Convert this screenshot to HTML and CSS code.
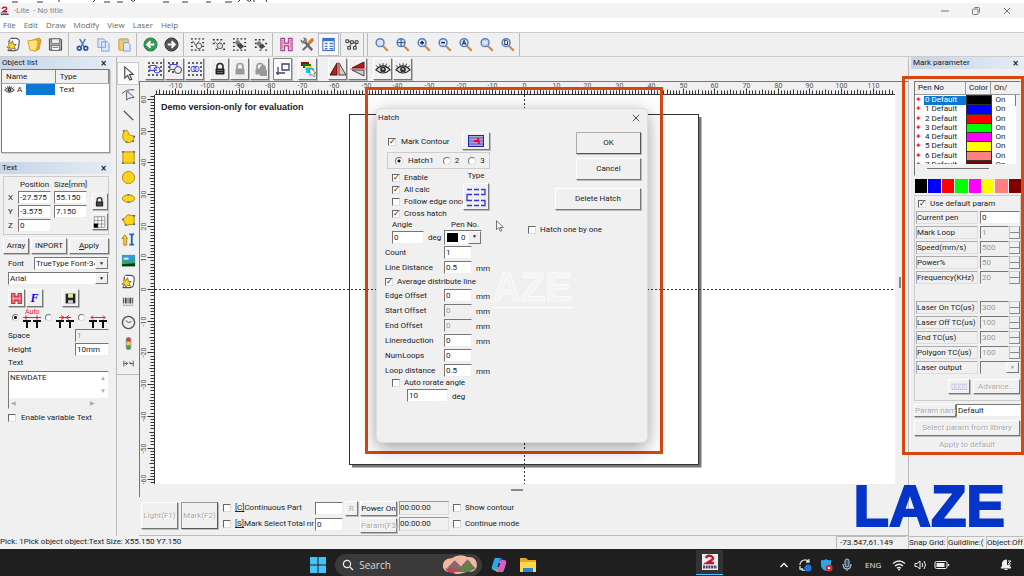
FILE: index.html
```html
<!DOCTYPE html>
<html lang="en">
<head>
<meta charset="utf-8">
<title>Lite - No title</title>
<link rel="stylesheet" href="styles.css">
</head>
<body>
<svg class="defs" aria-hidden="true">
  <symbol id="lens" viewBox="0 0 16 16"><path d="M9 9l5 5" stroke="#c8924a" stroke-width="2.4" stroke-linecap="round"/><circle cx="6.5" cy="6" r="4.2" fill="#d9e6f7" stroke="#5a7fc4" stroke-width="1.6"/></symbol>
  <symbol id="dots" viewBox="0 0 16 16"><path d="M1 2h2M5 2h2M9 2h2M13 2h2M1 14h2M5 14h2M9 14h2M13 14h2M1 6h2M13 6h2M1 10h2M13 10h2" fill="none" stroke="#333" stroke-width="1.500"/></symbol>
  <symbol id="lock" viewBox="0 0 16 16"><path d="M5 8V5.500a3 3 0 0 1 6 0V8" fill="none" stroke="currentColor" stroke-width="1.600"/><rect x="3.500" y="7.500" width="9" height="6" rx="1" fill="currentColor"/><path d="M5 9.500h6M5 11.500h6" stroke="#999" stroke-width=".6"/></symbol>
  <symbol id="eye" viewBox="0 0 18 14"><path d="M1 8q8-9 16 0q-8 7-16 0z" fill="#ddd" stroke="#222" stroke-width="1.300"/><circle cx="9" cy="7.500" r="3.200" fill="#333"/><circle cx="9" cy="7" r="1" fill="#ddd"/><path d="M3 5L1.500 3M6 3.500L5 1M9 3V.5M12 3.500l1-2.500M15 5l1.500-2" stroke="#222"/></symbol>
  <symbol id="arrow" viewBox="0 0 12 16"><path d="M2 1v12l3-3 2 5 2-1-2-4h4z" fill="#fff" stroke="#444" stroke-width="1"/></symbol>
  <symbol id="note" viewBox="0 0 16 16"><path d="M5 1.500h6q4 1 3 5l-1 6q-1 2-4 2H3q-1 0-1-1" fill="#fff" stroke="#555" stroke-width="1.200"/><path d="M5 1.500q-2 1-1 3M3 14q-1-1 1-3" fill="none" stroke="#555"/><path d="M3 4l2 3 2-3 1 4 3 0-2 2 1 3-3-1-2 2-1-3-3 0 2-2z" fill="#ffd51c" stroke="#655" stroke-width=".8"/></symbol>
</svg>

<svg class="sliver" aria-hidden="true"><path d="M12 2h6M37 2h6M58 1h2M95 0l-2 2M104 2h6M117 2h6M131 0q3 3 4 0M163 2h6M182 2h6M206 2h5M225 2h7M240 0l-2 2M247 0q3 3 4 0M254 0v2M266 0l1 2" stroke="#333" fill="none"/></svg>

<header class="titlebar">
  <svg class="i10" viewBox="0 0 14 14"><rect width="14" height="14" fill="#eee"/><path d="M3 4q1-3 5-2q3 2-1 4L4 8h6" fill="none" stroke="#c01830" stroke-width="2"/><path d="M1 11.500h11" stroke="#446" stroke-width="2"/></svg>
  <span class="apptitle">-Lite&nbsp; - No title</span>
  <div class="winbtns">
    <button aria-label="Minimize"><svg viewBox="0 0 10 10"><path d="M1 5h8" stroke="#777"/></svg></button>
    <button aria-label="Restore"><svg viewBox="0 0 10 10"><rect x="1.500" y="3" width="5.500" height="5.500" rx="1" fill="none" stroke="#777"/><path d="M3.500 1.500h4q1 0 1 1v4" fill="none" stroke="#777"/></svg></button>
    <button aria-label="Close"><svg viewBox="0 0 10 10"><path d="M2 2l6 6M8 2L2 8" stroke="#777"/></svg></button>
  </div>
</header>

<nav class="menubar">
  <button>File</button><button>Edit</button><button>Draw</button><button>Modify</button><button>View</button><button>Laser</button><button>Help</button>
</nav>

<div class="toolbar" role="toolbar" aria-label="Standard">
  <div class="tgroup">
    <button aria-label="New"><svg viewBox="0 0 16 16"><use href="#note"/></svg></button>
    <button aria-label="Open"><svg viewBox="0 0 16 16"><path d="M4 4l9-3 2 2-2 10-5 2z" fill="#f0a818" stroke="#a70" stroke-width=".6"/><path d="M1 4l8-1 3 1-2 11-7-1z" fill="#ffe07a" stroke="#c80" stroke-width=".7"/></svg></button>
    <button aria-label="Save"><svg viewBox="0 0 16 16"><path d="M1.500 2h12l1 1v11h-13z" fill="#aaa" stroke="#444"/><rect x="4" y="2" width="8" height="5" fill="#eee" stroke="#555" stroke-width=".7"/><rect x="4" y="9" width="8" height="5" fill="#fff" stroke="#555" stroke-width=".7"/><path d="M5 11h6" stroke="#666"/></svg></button>
  </div>
  <div class="tgroup">
    <button aria-label="Cut"><svg viewBox="0 0 16 16"><path d="M5 2l5 9M11 2l-5 9" stroke="#47a" stroke-width="1.400"/><circle cx="4.500" cy="12" r="2" fill="none" stroke="#25a" stroke-width="1.800"/><circle cx="11.500" cy="12" r="2" fill="none" stroke="#25a" stroke-width="1.800"/></svg></button>
    <button aria-label="Copy"><svg viewBox="0 0 16 16"><path d="M2 2h6l2 2v7H2zM6 5h6l2 2v8H6z" fill="#dce9fb" stroke="#7d9cdc"/></svg></button>
    <button aria-label="Paste"><svg viewBox="0 0 16 16"><rect x="2" y="2" width="10" height="12" rx="1" fill="#f3cf5c" stroke="#b9994a"/><rect x="5" y="1" width="4" height="3" fill="#bbb"/><path d="M7 6h5l2 2v7H7z" fill="#dce9fb" stroke="#7d9cdc"/></svg></button>
  </div>
  <div class="tgroup">
    <button aria-label="Undo"><svg viewBox="0 0 16 16"><circle cx="8" cy="8" r="7" fill="#3a9a4c" stroke="#276"/><path d="M12 8H5M8 4.500L4.500 8 8 11.500" fill="none" stroke="#fff" stroke-width="2"/></svg></button>
    <button aria-label="Redo"><svg viewBox="0 0 16 16"><circle cx="8" cy="8" r="7" fill="#555" stroke="#333"/><path d="M4 8h7M8 4.500L11.500 8 8 11.500" fill="none" stroke="#fff" stroke-width="2"/></svg></button>
  </div>
  <div class="tgroup">
    <button aria-label="Combine"><svg viewBox="0 0 16 16"><use href="#dots"/><path d="M3 4l3 5 4-5" fill="none" stroke="#555"/><circle cx="9.500" cy="9.500" r="3" fill="#eee" stroke="#555"/></svg></button>
    <button aria-label="Uncombine"><svg viewBox="0 0 16 16"><path d="M2 3h2M6 3h2M10 3h2M2 7h2M13 7h2M5 13h2M13 13h2" stroke="#333" stroke-width="1.500"/><path d="M4 5l3 3 3-3" fill="none" stroke="#555"/><circle cx="9.500" cy="9.500" r="3" fill="#ddd" stroke="#555"/></svg></button>
    <button aria-label="Group"><svg viewBox="0 0 16 16"><use href="#dots"/><circle cx="6" cy="6" r="2.500" fill="#777"/><path d="M5 9l4-3 4 4-4 3z" fill="#444"/></svg></button>
    <button aria-label="Ungroup"><svg viewBox="0 0 16 16"><path d="M2 3h2M6 3h2M10 3h2M2 7h2M2 11h2M13 7h2M7 14h2M13 14h2" stroke="#333" stroke-width="1.500"/><circle cx="6.500" cy="7" r="2.500" fill="#777"/><path d="M6 10l4-3 3 3-4 3z" fill="#444"/></svg></button>
  </div>
  <div class="tgroup">
    <button aria-label="Hatch"><svg viewBox="0 0 16 16"><path d="M2 1.500h4v5h4v-5h4v13h-4v-5H6v5H2z" fill="#f4b8cf" stroke="#a0499b" stroke-width="1.200"/><path d="M4 3v10M12 3v10" stroke="#d36" stroke-dasharray="1 1"/></svg></button>
    <button aria-label="Tools"><svg viewBox="0 0 16 16"><path d="M4 4l9 10" stroke="#666" stroke-width="2.600"/><path d="M13 4L3 14" stroke="#666" stroke-width="2.200"/><path d="M9 7l5-5" stroke="#e87820" stroke-width="3.500"/><path d="M1 3l2 2 2-2-1-2q3 0 3 3q-1 3-4 2.500Q1 6 1 3z" fill="#999" stroke="#555" stroke-width=".8"/></svg></button>
    <button class="pressed" aria-label="Properties"><svg viewBox="0 0 16 16"><rect x="2" y="1.500" width="12" height="13" fill="#fff" stroke="#2859b8"/><path d="M2 3h12" stroke="#3a73d8" stroke-width="3"/><path d="M4 7h3M9 7h4M4 10h3M9 10h4M4 12.500h3M9 12.500h4" stroke="#4a78c8" stroke-width="1.500"/></svg></button>
  </div>
  <div class="tgroup last">
    <button aria-label="Nodes"><svg viewBox="0 0 16 16"><path d="M2 3h3v3H2zM7 4h3v3H7zM12 4h3v3h-3zM4 10h3v3H4zM10 10h3v3h-3z" fill="#ddd" stroke="#333"/><path d="M5 5h2M10 6h2M6 10l2-3M12 10l1-3" stroke="#333"/></svg></button>
  </div>
  <div class="tgroup zooms">
    <button aria-label="Zoom"><svg viewBox="0 0 16 16"><use href="#lens"/></svg></button>
    <button aria-label="Pan"><svg viewBox="0 0 16 16"><use href="#lens"/><path d="M6.500 2v8M2.500 6h8" stroke="#346" stroke-width="1"/></svg></button>
    <button aria-label="Zoom in"><svg viewBox="0 0 16 16"><use href="#lens"/><path d="M6.500 4v4M4.500 6h4" stroke="#124" stroke-width="1.600"/></svg></button>
    <button aria-label="Zoom out"><svg viewBox="0 0 16 16"><use href="#lens"/><path d="M4.500 6h4" stroke="#124" stroke-width="1.600"/></svg></button>
    <button aria-label="Zoom all"><svg viewBox="0 0 16 16"><use href="#lens"/><path d="M4.500 8.500l2-5 2 5M5 7h3" fill="none" stroke="#124"/></svg></button>
    <button aria-label="Zoom selected"><svg viewBox="0 0 16 16"><use href="#lens"/><rect x="4.500" y="4" width="4" height="4" fill="#eef" stroke="#bcd"/></svg></button>
    <button aria-label="Zoom page"><svg viewBox="0 0 16 16"><use href="#lens"/><path d="M5 3.500h2l1 1V8H5z" fill="#fff" stroke="#124"/></svg></button>
  </div>
</div>

<main class="main">
  <aside class="dock left">
    <h2 class="panelhead">Object list<button aria-label="Close object list">×</button></h2>
    <div class="objlist">
      <table>
        <thead><tr><th>Name</th><th>Type</th></tr></thead>
        <tbody><tr><td><div class="objname"><svg viewBox="0 0 18 14"><use href="#eye"/></svg>A<span class="picked"></span></div></td><td>Text</td></tr></tbody>
      </table>
    </div>
    <h2 class="panelhead second">Text<button aria-label="Close text">×</button></h2>
    <div class="textpanel">
      <div class="posbox">
        <div class="posgrid">
          <span></span><span class="poshead">Position</span><span class="poshead">Size[mm]</span>
          <label for="px">X</label><input id="px" value="-27.575"><input aria-label="Width" value="55.150">
          <label for="py">Y</label><input id="py" value="-3.575"><input aria-label="Height" value="7.150">
          <label for="pz">Z</label><input id="pz" value="0">
        </div>
        <div class="poslocks">
          <button class="raised" aria-label="Lock ratio"><svg viewBox="0 0 16 16"><use href="#lock"/></svg></button>
          <button class="raised" aria-label="Anchor"><svg viewBox="0 0 16 16"><path d="M1.500 1.500h13v13h-13zM6 1.500v13M10.500 1.500v13M1.500 6h13M1.500 10.500h13" fill="#fff" stroke="#888"/><path d="M1 10h5v5H1z"/></svg></button>
        </div>
      </div>
      <div class="actions"><button class="raised">Array</button><button class="raised">INPORT</button><button class="raised"><u>A</u>pply</button></div>
      <div class="fontrow"><label for="ft">Font</label><span class="pick"><select id="ft"><option>TrueType Font-345</option></select></span></div>
      <span class="pick face"><select aria-label="Typeface"><option>Arial</option></select></span>
      <div class="fonticons">
        <button class="raised" aria-label="Hatch text"><svg viewBox="0 0 16 16"><path d="M2 2h4v4h4V2h4v12h-4v-4H6v4H2z" fill="#f9a" stroke="#c33" stroke-width="1.400"/><path d="M1 5h14M1 11h14" stroke="#c33"/></svg></button>
        <button class="raised fbtn" aria-label="Font settings">F</button>
        <button class="raised saver" aria-label="Save text"><svg viewBox="0 0 16 16"><path d="M2 2h12v12H2z" fill="#222"/><path d="M5 2h6v5H5z" fill="#dfe8a0"/><path d="M5 10h6v4H5z" fill="#ccc"/></svg></button>
      </div>
      <div class="spacing">
        <input type="radio" name="sp" checked aria-label="Auto spacing"><svg viewBox="0 0 20 20"><path d="M1 9.500h18M4 7.500v4M15 7.500v4" stroke="#e22" stroke-width="1.200"/><path d="M1 13h8M5 13v7M11 13h8M15 13v7" stroke="#111" stroke-width="2"/><text x="3" y="6" class="auto">Auto</text></svg>
        <input type="radio" name="sp" aria-label="Edge spacing"><svg viewBox="0 0 20 20"><path d="M4 9.500h12M6 7.500l3 2-3 2M14 7.500l-3 2 3 2" fill="none" stroke="#e22"/><path d="M1 13h8M5 13v7M11 13h8M15 13v7" stroke="#111" stroke-width="2"/></svg>
        <input type="radio" name="sp" aria-label="Centre spacing"><svg viewBox="0 0 20 20"><path d="M3 9.500h14M5 7.500l-2 2 2 2M15 7.500l2 2-2 2" fill="none" stroke="#e22"/><path d="M1 13h8M5 13v7M11 13h8M15 13v7" stroke="#111" stroke-width="2"/></svg>
      </div>
      <div class="field"><label for="spc">Space</label><input id="spc" value="1" disabled></div>
      <div class="field"><label for="hgt">Height</label><input id="hgt" value="10mm"></div>
      <label class="textlabel" for="txt">Text</label>
      <div class="areawrap"><textarea id="txt">NEWDATE</textarea><span class="up">▲</span><span class="down">▼</span><span class="lt">◀</span><span class="rt">▶</span></div>
      <label class="check vartext"><input type="checkbox">Enable variable Text</label>
    </div>
  </aside>

  <div class="palette" role="toolbar" aria-label="Draw">
    <button aria-label="Pick" class="pressed"><svg viewBox="0 0 16 16"><path d="M4 1v12l3-3 2.500 5 2-1-2.500-5h4z" fill="#fff" stroke="#444" stroke-width="1.200"/></svg></button>
    <button aria-label="Node"><svg viewBox="0 0 16 16"><path d="M1 6q5-5 13-4M6 3v10l2-2 6-1z" fill="#eee" stroke="#456"/><path d="M5 2h3v3H5z" fill="#89b"/></svg></button>
    <button aria-label="Line"><svg viewBox="0 0 16 16"><path d="M3 3l10 10" stroke="#345" stroke-width="1.300"/></svg></button>
    <button aria-label="Curve"><svg viewBox="0 0 16 16"><path d="M3 2q4-2 5 2q0 3 3 3q4 0 3 3q-2 5-7 4.500Q1 13 2 6z" fill="#ffd21c" stroke="#a80"/><path d="M2 2h2M13 8h2M5 14h2M12 13h2" stroke="#26b" stroke-width="1.500"/></svg></button>
    <button aria-label="Rectangle"><svg viewBox="0 0 16 16"><path d="M2 2h12v12H2z" fill="#ffd21c" stroke="#a80"/><path d="M1 2h2M13 2h2M1 14h2M13 14h2" stroke="#47a" stroke-width="2"/></svg></button>
    <button aria-label="Circle"><svg viewBox="0 0 16 16"><circle cx="8" cy="8" r="6.500" fill="#ffd21c" stroke="#a80"/></svg></button>
    <button aria-label="Ellipse"><svg viewBox="0 0 16 16"><ellipse cx="8" cy="8" rx="6.500" ry="4" fill="#ffd21c" stroke="#a80"/><path d="M7 4h2M7 12h2" stroke="#47a" stroke-width="1.500"/></svg></button>
    <button aria-label="Polygon"><svg viewBox="0 0 16 16"><path d="M2 8l5-5 7 1v9l-9 1z" fill="#ffd21c" stroke="#a80"/><path d="M1 8h2M13 4h2M13 13h2M4 14h2" stroke="#26b" stroke-width="1.500"/></svg></button>
    <button aria-label="Text"><svg viewBox="0 0 16 16"><path d="M1 7l3-4 3 4H6v7H3V7z" fill="#ffd21c" stroke="#863" stroke-width=".8"/><path d="M9 2.500h5M9 13.500h5M11.500 2v12" stroke="#26a" stroke-width="2"/></svg></button>
    <button aria-label="Bitmap"><svg viewBox="0 0 16 16"><path d="M1 2h14v12H1z" fill="#39d"/><path d="M1 9q5-3 7 0t7-4v9H1z" fill="#3a5"/><path d="M3 5h5v2H3z" fill="#dff"/><path d="M1 12l14-1v3H1z" fill="#132"/></svg></button>
    <button aria-label="Vector file"><svg viewBox="0 0 16 16"><use href="#note"/></svg></button>
    <button aria-label="Barcode"><svg viewBox="0 0 16 16"><path d="M2 7h12" stroke="#444" stroke-width="6" stroke-dasharray="1 1 2 1"/><path d="M2 12h12" stroke="#777" stroke-dasharray="2 1"/></svg></button>
    <button aria-label="Timer"><svg viewBox="0 0 16 16"><circle cx="8" cy="8" r="6.500" fill="#eee" stroke="#555" stroke-width="1.500"/><path d="M5 6l3 2 3-1" fill="none" stroke="#444"/></svg></button>
    <button aria-label="Input output"><svg viewBox="0 0 16 16"><rect x="5" y="1" width="6" height="14" rx="3" fill="#999"/><circle cx="8" cy="4" r="2.200" fill="#e33"/><circle cx="8" cy="8" r="2.200" fill="#fc3"/><circle cx="8" cy="12" r="2.200" fill="#3a4"/></svg></button>
    <button aria-label="Encoder"><svg viewBox="0 0 16 16"><path d="M3 5v6M13 5v6M3 8h4M9 8h4M5 6l2 2-2 2M9 6l2 3" fill="none" stroke="#555"/></svg></button>
  </div>

  <section class="center">
    <div class="toolbar2" role="toolbar" aria-label="Arrange">
      <button class="raised" aria-label="Select all"><svg viewBox="0 0 16 16"><use href="#dots"/><rect x="3" y="4.500" width="6" height="5" fill="none" stroke="#44e"/><circle cx="10" cy="9" r="3" fill="none" stroke="#44e"/></svg></button>
      <button class="raised" aria-label="Invert selection"><svg viewBox="0 0 16 16"><path d="M1 2h2M5 2h2M9 2h2M1 6h2M1 10h2M5 11h2" stroke="#222" stroke-width="1.500"/><rect x="3" y="3.500" width="7" height="5" fill="none" stroke="#44e"/><circle cx="11" cy="9" r="3.500" fill="#eee" stroke="#445"/></svg></button>
      <button class="raised" aria-label="Selection"><svg viewBox="0 0 16 16"><use href="#dots"/><rect x="4" y="5.500" width="5" height="5" rx="2" fill="none" stroke="#44e"/><rect x="7" y="5.500" width="5" height="5" rx="2" fill="none" stroke="#44e"/></svg></button>
      <button class="raised gap" aria-label="Lock"><svg viewBox="0 0 16 16"><use href="#lock"/></svg></button>
      <button class="raised dim" aria-label="Unlock"><svg viewBox="0 0 16 16"><use href="#lock"/></svg></button>
      <button class="raised dim" aria-label="Unlock all"><svg viewBox="0 0 16 16"><use href="#lock"/><path d="M8 9V7a3 3 0 0 1 6 0v2h1v6H8z" fill="currentColor"/></svg></button>
      <button class="raised sunk" aria-label="Put to origin"><svg viewBox="0 0 16 16"><path d="M7 3h7v6H7zM3 6v8M1 12h9" fill="none" stroke="#446" stroke-width="1.300"/></svg></button>
      <button class="raised gap" aria-label="Layers"><svg viewBox="0 0 16 16"><path d="M1 1h8v4H1z" fill="#811"/><path d="M3 3h8v4H3z" fill="#171"/><path d="M5 5h7v4H5z" fill="#fc2"/><path d="M6 7h8v5H6z" fill="#1cd"/><path d="M10 7v8l2-2 2 3 1-1-1-3h2z" fill="#fff" stroke="#666" stroke-width=".7"/></svg></button>
      <button class="raised wide" aria-label="Mirror horizontal"><svg viewBox="0 0 16 16"><path d="M7 2v12H0z" fill="#a22" stroke="#511"/><path d="M9 2v12h7z" fill="#ccc" stroke="#444"/><path d="M8 1v14" stroke="#f55"/></svg></button>
      <button class="raised" aria-label="Mirror vertical"><svg viewBox="0 0 16 16"><path d="M2 7h12V1z" fill="#a22" stroke="#511"/><path d="M2 9h12v6z" fill="#ccc" stroke="#444"/><path d="M0 8h16" stroke="#f55"/></svg></button>
      <button class="raised gap" aria-label="Show"><svg viewBox="0 0 18 14"><use href="#eye"/></svg></button>
      <button class="raised" aria-label="Preview"><svg viewBox="0 0 18 14"><use href="#eye"/></svg></button>
    </div>
    <div class="stage">
      <svg class="rulertop" id="rulertop" aria-hidden="true"></svg>
      <svg class="rulerleft" id="rulerleft" aria-hidden="true"></svg>
      <div class="canvas">
        <svg class="sheet" aria-hidden="true">
          <path d="M197 371h348V22" fill="none" stroke="#777" stroke-width="3"/>
          <rect x="194.500" y="19.500" width="349" height="350" fill="#fff" stroke="#333"/>
          <path d="M0 194.500h740M369.500 0v389" stroke="#333" stroke-dasharray="2 2"/>
        </svg>
        <strong class="demo">Demo version-only for evaluation</strong>
        <div class="mark-frame"></div>

        <div class="dialog" role="dialog" aria-label="Hatch">
          <span class="ghost" aria-hidden="true">AZE</span>
          <div class="dialoghead"><span>Hatch</span><button aria-label="Close"><svg viewBox="0 0 10 10"><path d="M1 1l8 8M9 1l-8 8" stroke="#222"/></svg></button></div>
          <div class="dialogbody">
            <div class="settings">
              <div class="contour"><label class="check"><input type="checkbox" checked>Mark Contour</label>
                <button class="raised" aria-label="Contour order"><svg viewBox="0 0 16 12"><rect x=".5" y=".5" width="15" height="11" fill="#aac" stroke="#22a"/><path d="M1 3h14M1 6h14M1 9h14" stroke="#55c"/><path d="M6 6h4M10 3l1 6" stroke="#e04" stroke-width="2"/></svg></button></div>
              <div class="passes"><label class="check"><input type="radio" name="h" checked>Hatch1</label><label class="check"><input type="radio" name="h">2</label><label class="check"><input type="radio" name="h">3</label></div>
              <div class="modes">
                <div class="modelist">
                  <label class="check"><input type="checkbox" checked>Enable</label>
                  <label class="check"><input type="checkbox" checked>All calc</label>
                  <label class="check"><input type="checkbox">Follow edge once</label>
                  <label class="check"><input type="checkbox" checked>Cross hatch</label>
                </div>
                <div class="type"><span>Type</span><button class="raised" aria-label="Hatch type"><svg viewBox="0 0 22 20"><path d="M2 2.500h5M9 2.500h5M16 2.500h4v5h-4M9 7.500h5M7 7.500H2v6h5M9 13.500h5M16 13.500h4v5h-4M9 18.500h5M2 18.500h5" fill="none" stroke="#33d" stroke-width="1.300"/></svg></button></div>
              </div>
              <div class="anglerow">
                <div class="angle"><label for="ang">Angle</label><div class="pair"><input id="ang" value="0"><span>deg</span></div></div>
                <div class="pen"><label for="pen">Pen No.</label><span class="pick penpick"><i></i><select id="pen"><option>0</option></select></span></div>
              </div>
              <div class="rows">
                <div class="row"><label for="r1">Count</label><input id="r1" value="1"></div>
                <div class="row"><label for="r2">Line Distance</label><input id="r2" value="0.5"><span>mm</span></div>
                <label class="check avg"><input type="checkbox" checked>Average distribute line</label>
                <div class="row"><label for="r3">Edge Offset</label><input id="r3" value="0"><span>mm</span></div>
                <div class="row"><label for="r4">Start Offset</label><input id="r4" value="0" disabled><span>mm</span></div>
                <div class="row"><label for="r5">End Offset</label><input id="r5" value="0" disabled><span>mm</span></div>
                <div class="row"><label for="r6">Linereduction</label><input id="r6" value="0"><span>mm</span></div>
                <div class="row"><label for="r7">NumLoops</label><input id="r7" value="0"></div>
                <div class="row"><label for="r8">Loop distance</label><input id="r8" value="0.5"><span>mm</span></div>
                <label class="check rot"><input type="checkbox">Auto rorate angle</label>
                <div class="rotrow"><input aria-label="Rotate angle" value="10"><span>deg</span></div>
              </div>
            </div>
            <div class="commands">
              <button class="raised ok">OK</button>
              <button class="raised">Cancel</button>
              <button class="raised del">Delete Hatch</button>
              <label class="check one"><input type="checkbox">Hatch one by one</label>
            </div>
          </div>
        </div>
        <svg class="pointer" viewBox="0 0 12 16" aria-hidden="true"><use href="#arrow"/></svg>
      </div>
      <div class="vscroll"><i></i></div>
      <div class="hscroll"><i></i></div>
    </div>
    <div class="marking">
      <button class="raised big" disabled>Light(F1)</button>
      <button class="raised big strong" disabled>Mark(F2)</button>
      <div class="two chk"><label class="check"><input type="checkbox"><span><u>[C]</u>Continuous</span></label><label class="check"><input type="checkbox"><span><u>[S]</u>Mark Select</span></label></div>
      <div class="two parts"><div><label for="part">Part</label><input id="part" value=""></div><div><label for="tot">Total nr</label><input id="tot" value="0"></div></div>
      <button class="raised reset" disabled>R</button>
      <div class="two power"><button class="raised">Power On</button><button class="raised" disabled>Param(F3)</button></div>
      <div class="two times"><output>00:00:00</output><output>00:00:00</output></div>
      <div class="two chk2"><label class="check"><input type="checkbox">Show contour</label><label class="check"><input type="checkbox">Continue mode</label></div>
    </div>
  </section>

  <aside class="dock right">
    <h2 class="panelhead">Mark parameter<button aria-label="Close mark parameter">×</button></h2>
    <div class="pens">
      <div class="penhead"><span>Pen No</span><span>Color</span><span>On/</span></div>
      <div class="penclip">
        <table>
          <tr class="sel"><td>✦</td><td>0 Default</td><td class="c0"></td><td>On</td></tr>
          <tr><td>✦</td><td>1 Default</td><td class="c1"></td><td>On</td></tr>
          <tr><td>✦</td><td>2 Default</td><td class="c2"></td><td>On</td></tr>
          <tr><td>✦</td><td>3 Default</td><td class="c3"></td><td>On</td></tr>
          <tr><td>✦</td><td>4 Default</td><td class="c4"></td><td>On</td></tr>
          <tr><td>✦</td><td>5 Default</td><td class="c5"></td><td>On</td></tr>
          <tr><td>✦</td><td>6 Default</td><td class="c6"></td><td>On</td></tr>
          <tr><td>✦</td><td>7 Default</td><td class="c7"></td><td>On</td></tr>
        </table>
        <i class="thumb"></i>
      </div>
      <i class="hthumb"></i>
    </div>
    <div class="swatches"><button class="c0" aria-label="Pen 0"></button><button class="c1" aria-label="Pen 1"></button><button class="c2" aria-label="Pen 2"></button><button class="c3" aria-label="Pen 3"></button><button class="c4" aria-label="Pen 4"></button><button class="c5" aria-label="Pen 5"></button><button class="c6" aria-label="Pen 6"></button><button class="c7" aria-label="Pen 7"></button></div>
    <div class="params">
      <label class="check"><input type="checkbox" checked>Use default param</label>
      <div class="prow"><label for="p0">Current pen</label><input id="p0" value="0"></div>
      <div class="prow spin"><label for="p1">Mark Loop</label><input id="p1" value="1" disabled><i></i></div>
      <div class="prow spin"><label for="p2">Speed(mm/s)</label><input id="p2" value="500" disabled><i></i></div>
      <div class="prow spin"><label for="p3">Power%</label><input id="p3" value="50" disabled><i></i></div>
      <div class="prow spin"><label for="p4">Frequency(KHz)</label><input id="p4" value="20" disabled><i></i></div>
      <div class="prow spin later"><label for="p5">Laser On TC(us)</label><input id="p5" value="300" disabled><i></i></div>
      <div class="prow spin"><label for="p6">Laser Off TC(us)</label><input id="p6" value="100" disabled><i></i></div>
      <div class="prow spin"><label for="p7">End TC(us)</label><input id="p7" value="300" disabled><i></i></div>
      <div class="prow spin"><label for="p8">Polygon TC(us)</label><input id="p8" value="100" disabled><i></i></div>
      <div class="prow"><label for="p9">Laser output</label><span class="pick off"><select id="p9" disabled><option></option></select></span></div>
      <div class="advance"><button class="raised" disabled>▯▯▯▯</button><button class="raised" disabled>Advance...</button></div>
    </div>
    <div class="pname"><button class="raised" disabled>Param name</button><input aria-label="Param name" value="Default"></div>
    <button class="raised full" disabled>Select param from library</button>
    <button class="raised full last" disabled>Apply to default</button>
    <div class="mark-frame side"></div>
    <span class="brand">LAZE</span>
  </aside>
</main>

<footer class="status"><span class="msg">Pick: 1Pick object object:Text Size: X55.150 Y7.150</span><span class="cell coords">-73.547,61.149</span><span class="cell">Snap Grid:</span><span class="cell">Guildline:(</span><span class="cell">Object:Off</span></footer>

<div class="taskbar">
  <div class="launch">
    <button aria-label="Start"><svg class="i16" viewBox="0 0 16 16"><path d="M0 0h7.500v7.500H0zM8.500 0H16v7.500H8.500zM0 8.500h7.500V16H0zM8.500 8.500H16V16H8.500z" fill="#45c4f5"/></svg></button>
    <div class="search"><svg viewBox="0 0 12 12"><circle cx="5" cy="5" r="3.600" fill="none" stroke="#eee" stroke-width="1.200"/><path d="M8 8l3 3" stroke="#eee" stroke-width="1.200"/></svg><input type="search" aria-label="Search" placeholder="Search">
      <svg class="scene" viewBox="0 0 34 18"><path d="M1 12Q0 3 9 3Q17-2 24 2q9-1 9 8q0 7-10 6q-10 4-14 0Q3 17 1 12z" fill="#f0b8a0"/><path d="M5 12l7-7 6 6 6-7 8 9-8 3H9z" fill="#8a6670"/><path d="M16 13q5-5 8-4l2-4 3 8-3 3h-9z" fill="#5c8444"/><path d="M3 13q8-2 13 1l-5 3q-6 0-8-4z" fill="#b54a58"/></svg></div>
    <button aria-label="Copilot"><svg class="i16" viewBox="0 0 16 16"><path d="M4 1h5q2 0 1.500 2L8 11q-.5 2-3 2H3q-3 0-2-4L3 3q.3-1.500 1-2z" fill="#2ba7e8"/><path d="M12 15H7q-2 0-1.500-2L8 5q.5-2 3-2h2q3 0 2 4l-2 6q-.3 1.500-1 2z" fill="#d75fc4"/><path d="M2 10q1 3 3 3h1q0 2 2 2-2 0-3-1-3-1-3-4z" fill="#f7b733"/><path d="M9 1q2 0 3 2h-1q-2 0-3 2z" fill="#3459d4"/><path d="M7.500 6h1.500l-1 4H6.500z" fill="#222"/></svg></button>
    <button aria-label="Files"><svg class="i16" viewBox="0 0 16 16"><path d="M0 1h6l2 2h8v12H0z" fill="#e9a820"/><path d="M0 5h16v10H0z" fill="#ffd650"/><path d="M3 15v-4h10v4z" fill="#2a84d4"/></svg></button>
  </div>
  <button class="running" aria-label="Running app"><svg class="i16" viewBox="0 0 16 16"><rect width="16" height="16" fill="#eee"/><path d="M4 4q1-3 5-2q4 2 0 4.500L5 9h7" fill="none" stroke="#c01830" stroke-width="2.500"/><path d="M1 13h14" stroke="#446" stroke-width="3" stroke-dasharray="2 .7"/></svg></button>
  <div class="tray">
    <svg viewBox="0 0 14 14"><path d="M3.500 9L7 5.500 10.500 9" fill="none" stroke="#eee" stroke-width="1.500"/></svg>
    <svg viewBox="0 0 14 14"><path d="M2 7a5 5 0 0 1 9-3M11 1v3H8M2 8v3h3M3 11q2 2 4 1" fill="none" stroke="#ddd" stroke-width="1.300"/><circle cx="10" cy="10" r="3.500" fill="#1878e0"/></svg>
    <svg viewBox="0 0 14 14"><path d="M2 2q3 1 5-1q2 2 5 1v5q0 4-5 6Q2 11 2 7z" fill="#29a9ea"/><circle cx="10" cy="10" r="3.500" fill="#d63030"/><path d="M9 9l2 2M11 9l-2 2" stroke="#fff"/></svg>
    <svg viewBox="0 0 14 14"><rect x="5" y="1" width="4" height="8" rx="2" fill="#456" stroke="#aaccd8"/><path d="M3 6q0 5 4 5t4-5M7 11v2" fill="none" stroke="#aaccd8" stroke-width="1.200"/></svg>
    <span class="lang">ENG</span>
    <svg viewBox="0 0 14 14"><path d="M1 5.500q6-5 12 0M3 8q4-3.500 8 0M5 10.200q2-1.500 4 0" fill="none" stroke="#eee" stroke-width="1.300"/><circle cx="7" cy="11.500" r="1" fill="#eee"/></svg>
    <svg viewBox="0 0 14 14"><path d="M2 5.500h2L7 3v8L4 8.500H2zM9 5q1.500 2 0 4M11 3q3 4 0 8" fill="none" stroke="#eee"/></svg>
    <svg class="bat" viewBox="0 0 16 14"><rect x="1" y="3.500" width="12" height="7" rx="1.500" fill="none" stroke="#eee"/><rect x="2.500" y="5" width="8" height="4" fill="#eee"/><path d="M14.500 6v2" stroke="#eee" stroke-width="1.500"/></svg>
    <svg class="bell" viewBox="0 0 14 14"><path d="M2 10l1.500-2V5q.5-3 3.500-3t3.500 3v3l1.500 2zM5.500 11.500h3" fill="#eee" stroke="#eee"/><path d="M8 2h5v5H8z" fill="#1f1f1f"/><path d="M9 3h3L9 6h3" fill="none" stroke="#eee"/></svg>
  </div>
</div>
<script src="script.js"></script>
</body>
</html>
```

FILE: styles.css
```css
* { box-sizing: border-box; }
body {
  margin: 0; min-height: 100vh; display: flex; flex-direction: column;
  font-family: Roboto, "Liberation Sans", sans-serif; font-size: 8px; line-height: 10px;
  color: #222; background: #f0f0f0; overflow-x: hidden;
}
button, input, select, textarea { font: inherit; color: inherit; margin: 0; padding: 0; border: 0; border-radius: 0; background: none; outline: 0; min-width: 0; }
button { text-align: center; white-space: nowrap; }
label, span { white-space: nowrap; }
svg { display: block; flex: none; }
i { display: block; }
.defs { position: absolute; width: 0; height: 0; }
.i10 { width: 10px; height: 10px; }
.i16 { width: 16px; height: 16px; }

/* classic raised and sunken edges */
.raised { background: #f0f0f0; border: 1px solid; border-color: #fff #777 #777 #fff; box-shadow: 1px 1px 0 #bbb; }
button:disabled { color: #aaa; text-shadow: 1px 1px 0 #fff; }
input:not([type]), textarea, .pick { background: #fff; border: 1px solid; border-color: #777 #eee #eee #777; }
input:not([type]) { height: 13px; padding: 0 0 0 1px; }
input:not([type]):disabled { background: #f0f0f0; color: #999; }
.check { display: flex; align-items: center; gap: 5px; }
input[type=checkbox] { appearance: none; flex: none; width: 8px; height: 8px; background: #fff; border: 1px solid; border-color: #666 #ddd #ddd #666; position: relative; }
input[type=checkbox]:checked::before { content: "✓"; position: absolute; left: 0; top: -2px; font: bold 8px/10px "DejaVu Sans", sans-serif; color: #111; }
input[type=radio] { appearance: none; flex: none; width: 8px; height: 8px; border-radius: 50%; border: 1px solid; border-color: #777 #ddd #ddd #777; background: #fff; }
input[type=radio]:checked { background: radial-gradient(circle, #111 0 1px, #fff 2px); }
.pick { display: flex; position: relative; height: 13px; min-width: 0; }
.pick select { appearance: none; flex: 1; width: 100%; padding: 0 12px 0 1px; line-height: 10px; opacity: 1; }
.pick::after { content: "▼"; position: absolute; right: 0; top: 0; bottom: 0; width: 11px; background: #f0f0f0; border: 1px solid; border-color: #fff #777 #777 #fff; font-size: 5px; line-height: 9px; text-align: center; pointer-events: none; }
.pick.off { background: #f0f0f0; }
.pick.off::after { color: #999; }

/* top of the window */
.sliver { width: 100%; height: 3px; background: #fff; }
.titlebar { display: flex; align-items: center; height: 15px; background: #f3f3f3; color: #888; }
.apptitle { margin-left: 4px; }
.winbtns { margin-left: auto; display: flex; gap: 21px; padding-right: 12px; }
.winbtns svg { width: 10px; height: 10px; }
.menubar { display: flex; gap: 8px; height: 14px; padding-left: 3px; background: #fff; color: #666; font: 8px/14px "Open Sans", sans-serif; }
.toolbar { display: flex; align-items: center; height: 25px; border: solid #ccc; border-width: 1px 0; }
.tgroup { display: flex; height: 100%; padding: 0 1px 0 3px; border-right: 1px solid #bbb; }
.tgroup:first-child { padding-right: 2px; }
.tgroup.last { margin-right: 3px; padding-left: 0; }
.tgroup.zooms { border-left: 1px solid #bbb; }
.tgroup button { width: 21px; display: flex; align-items: center; justify-content: center; }
.tgroup svg { width: 15px; height: 15px; }
.tgroup .pressed { background: #fafafa; border: 1px solid #bbc; }

.main { display: flex; flex: 1; }
.panelhead { margin: 0; display: flex; height: 12px; padding: 0 5px 0 2px; font: 8px/11px Roboto, sans-serif; background: linear-gradient(90deg, #c6d4e6, #e4ecf5); }
.panelhead button { margin-left: auto; font: bold 8px/11px "DejaVu Sans", sans-serif; color: #111; }

/* left dock */
.dock.left { width: 117px; flex: none; border-right: 1px solid #bbb; padding-right: 4px; }
.objlist { height: 84px; margin: 0 2px 0 1px; background: #fff; border: 1px solid; border-color: #777 #999 #999 #777; box-shadow: 1px 1px 0 #ccc; }
.objlist table { width: 100%; border-collapse: collapse; table-layout: fixed; }
.objlist th { font-weight: 400; text-align: left; background: #f0f0f0; padding: 2px 4px 1px; border-right: 1px solid #888; border-bottom: 1px solid #aaa; }
.objlist td { padding: 0 0 0 4px; height: 12px; }
.objlist td:first-child { padding: 0; }
.objname { display: flex; align-items: center; gap: 2px; padding-left: 2px; }
.objname svg { width: 11px; height: 9px; }
.picked { flex: 1; height: 11px; margin-left: 2px; background: #0a78d7; }
.panelhead.second { margin-top: 9px; }
.textpanel { padding: 2px 3px 0 3px; }
.posbox { display: flex; height: 59px; border: 1px solid #ccc; padding: 2px 2px 0 4px; gap: 5px; }
.posgrid { display: grid; grid-template-columns: 7px 33px 33px; grid-template-rows: 11px 13px 13px 13px; gap: 1px 3px; align-items: center; }
.posgrid input { width: 100%; }
.poshead { text-align: center; }
.poslocks { display: flex; flex-direction: column; gap: 3px; padding-top: 14px; }
.poslocks button { width: 16px; height: 17px; }
.poslocks svg { width: 13px; height: 14px; }
.actions { display: grid; grid-template-columns: 26px 36px 1fr; gap: 2px; margin-top: 3px; height: 16px; }
.fontrow { display: flex; align-items: center; margin: 3px 0 0 5px; gap: 10px; }
.fontrow .pick { flex: 1; }
.face { margin: 2px 0 0 5px; }
.fonticons { display: flex; gap: 1px; margin: 4px 0 0 5px; }
.fonticons button { width: 17px; height: 18px; padding: 1px; }
.fonticons svg { width: 13px; height: 13px; }
.fonticons .fbtn { color: #00f; font: italic bold 12px/14px "Liberation Serif", serif; }
.fonticons .saver { margin-left: 18px; }
.spacing { display: flex; align-items: center; gap: 3px; margin-left: 9px; height: 21px; }
.spacing svg { width: 20px; height: 20px; }
.spacing input { width: 7px; height: 7px; }
.auto { font-size: 7px; fill: #e22; }
.field { display: grid; grid-template-columns: 1fr 34px; align-items: center; padding-left: 5px; height: 13px; margin-top: 1px; }
.textlabel { display: block; margin: 2px 0 3px 5px; }
.areawrap { position: relative; margin-left: 5px; height: 38px; }
.areawrap textarea { display: block; width: 100%; height: 100%; resize: none; padding: 1px 0 0 1px; overflow: hidden; }
.areawrap::after { content: ""; position: absolute; left: 1px; right: 1px; bottom: 1px; height: 10px; background: #f0f0f0; }
.areawrap span { position: absolute; z-index: 1; font-size: 6px; line-height: 8px; color: #aaa; }
.areawrap .up { right: 3px; top: 3px; }
.areawrap .down { right: 3px; top: 16px; }
.areawrap .lt { left: 3px; bottom: 2px; }
.areawrap .rt { right: 14px; bottom: 2px; }
.vartext { margin: 4px 0 0 5px; }

/* drawing tools */
.palette { width: 22px; height: 318px; flex: none; display: flex; flex-direction: column; padding-top: 5px; border-bottom: 1px solid #bbb; }
.palette button { flex: 1; display: flex; align-items: center; justify-content: center; }
.palette svg { width: 15px; height: 15px; }
.palette .pressed { background: #fafafa; border: 1px solid #ccc; }

/* workspace */
.center { flex: 1; min-width: 0; display: flex; flex-direction: column; }
.toolbar2 { display: flex; gap: 1px; height: 24px; padding: 1px 0 1px 6px; }
.toolbar2 button { width: 19px; padding: 0 1px; }
.toolbar2 svg { width: 16px; height: 16px; }
.toolbar2 .gap { margin-left: 5px; }
.toolbar2 .wide { margin-left: 10px; }
.toolbar2 .dim { color: #999; }
.toolbar2 .sunk { margin-left: 3px; background: #fafafa; border-color: #888; }
.stage { flex: 1; display: grid; grid-template-columns: 15px 1fr 13px; grid-template-rows: 13px minmax(389px, 1fr) 13px; border-left: 1px solid #777; border-top: 1px solid #777; }
.rulertop { grid-column: 2; width: 100%; height: 13px; }
.rulerleft { grid-column: 1; grid-row: 2; width: 15px; height: 100%; }
.rulertop text, .rulerleft text { font: 7px Roboto, sans-serif; fill: #555; text-anchor: middle; }
.canvas { grid-column: 2; grid-row: 2; position: relative; background: #fff; }
.sheet { position: absolute; inset: 0; width: 100%; height: 100%; }
.demo { position: absolute; left: 6px; top: 7px; font: bold 9px/11px "Liberation Sans", sans-serif; color: #222; }
.vscroll { grid-column: 3; grid-row: 2; padding: 182px 0 0 4px; }
.vscroll i { width: 2px; height: 11px; background: #888; }
.hscroll { grid-column: 2; grid-row: 3; padding: 5px 16px 0 0; }
.hscroll i { width: 12px; height: 2px; margin: 0 auto; background: #888; }
.mark-frame { position: absolute; left: 210px; top: -8px; width: 298px; height: 367px; border: 3px solid #d8470f; pointer-events: none; }
.pointer { position: absolute; left: 340px; top: 125px; width: 9px; height: 12px; }

/* hatch dialog */
.dialog { position: absolute; left: 221px; top: 13px; width: 272px; height: 335px; background: #f0f0f0; border: 1px solid #ddd; border-radius: 6px; box-shadow: 0 5px 18px rgba(0,0,0,.38); }
.ghost { position: absolute; left: 115px; top: 158px; font: bold 40px/40px "Liberation Sans", sans-serif; color: #f4f4f4; border-bottom: 1px solid #fff; -webkit-text-stroke: 1px #fafafa; }
.dialoghead { display: flex; align-items: center; justify-content: space-between; height: 17px; padding: 0 7px 0 1px; }
.dialoghead svg { width: 8px; height: 8px; }
.dialogbody { display: flex; justify-content: space-between; padding: 6px 6px 0 8px; position: relative; }
.settings { width: 106px; }
.contour { display: flex; justify-content: space-between; padding: 0 1px 0 3px; height: 19px; }
.contour button { width: 28px; height: 18px; padding-left: 5px; }
.contour svg { width: 16px; height: 12px; }
.passes { display: flex; gap: 9px; align-items: center; height: 17px; margin: 1px 1px 0 2px; padding-left: 7px; border: 1px solid #ccc; }
.passes .check + .check { gap: 4px; }
.modes { display: flex; justify-content: space-between; padding: 4px 2px 0 7px; }
.modelist { display: flex; flex-direction: column; gap: 2px; height: 47px; width: 69px; }
.type { display: flex; flex-direction: column; align-items: center; gap: 2px; margin-top: -2px; height: 40px; }
.type button { width: 26px; height: 27px; padding: 1px; }
.type svg { width: 22px; height: 20px; }
.modes .check { gap: 4px; }
.anglerow { display: flex; gap: 3px; padding-left: 7px; }
.angle, .pen { display: flex; flex-direction: column; }
.angle .pair { display: flex; align-items: center; gap: 4px; height: 15px; }
.angle .pair input { width: 32px; }
.angle .pair span { width: 13px; }
.pen label { padding-left: 7px; }
.pen .penpick { width: 38px; height: 15px; }
.penpick i { width: 11px; margin: 2px; background: #000; flex: none; }
.rows { display: flex; flex-direction: column; }
.row { display: grid; grid-template-columns: 59px 28px 1fr; height: 15px; align-items: center; }
.row span { padding: 3px 0 0 4px; }
.avg { height: 13px; gap: 4px; }
.rot { height: 10px; padding-left: 7px; gap: 4px; }
.rotrow { display: flex; align-items: center; gap: 4px; padding-left: 22px; }
.rotrow input { width: 41px; }
.rotrow span { padding-top: 4px; }
.commands { display: flex; flex-direction: column; align-items: flex-end; }
.commands button { width: 65px; height: 22px; }
.commands .ok { border-color: #aaa #555 #555 #aaa; margin-bottom: 4px; }
.commands .del { width: 86px; margin-top: 8px; }
.commands .one { margin: 15px 39px 0 0; gap: 4px; }

/* marking strip */
.marking { display: flex; align-items: flex-start; height: 39px; padding: 4px 0 0 2px; border-bottom: 1px solid #bbb; }
.marking .big { width: 37px; height: 27px; margin: 1px 3px 0 0; }
.marking .strong { border-color: #999 #555 #555 #999; }
.two { display: flex; flex-direction: column; gap: 2px; }
.two > * { height: 14px; }
.chk { margin-left: 2px; width: 61px; }
.chk .check { gap: 4px; }
.parts { margin-left: 3px; }
.parts > div { display: grid; grid-template-columns: 25px 28px; gap: 3px; align-items: center; }
.reset { width: 13px; height: 15px; margin: 0 2px; }
.power button { width: 37px; height: 15px; }
.times { margin: 0 4px 0 2px; }
.times output { width: 50px; border: 1px solid; border-color: #999 #ddd #ddd #999; line-height: 12px; }
.chk2 .check { gap: 4px; }

/* right dock */
.dock.right { width: 116px; flex: none; position: relative; border-left: 1px solid #bbb; padding-left: 2px; }
.dock.right > * { margin-left: 3px; margin-right: 3px; }
.dock.right > .panelhead { margin: 0 0 12px; }
.pens { height: 95px; border: 1px solid; border-color: #777 #eee #eee #777; background: #f0f0f0; }
.penhead { display: grid; grid-template-columns: 51px 25px 1fr; height: 13px; border-bottom: 1px solid #999; }
.penhead span { padding: 1px 0 0 3px; border-right: 1px solid #999; }
.penhead span:last-child { border: 0; }
.penclip { position: relative; height: 69px; overflow: hidden; background: #fff; margin-right: 4px; }
.pens table { border-collapse: collapse; width: 100%; height: 75px; table-layout: fixed; }
.pens td { padding: 0; line-height: 8px; white-space: nowrap; }
.pens td:nth-child(1) { width: 9px; color: #e22; }
.pens td:nth-child(2) { width: 42px; padding-left: 1px; }
.pens td:nth-child(3) { width: 25px; border: 1px solid #333; }
.pens td:nth-child(4) { padding-left: 4px; }
.pens .sel td:nth-child(2) { background: #0a78d7; color: #fff; }
.thumb { position: absolute; right: 0; top: 0; width: 1px; height: 11px; background: #777; }
.hthumb { width: 62px; height: 1px; margin: 4px 0 0 12px; background: #777; }
.c0 { background: #000; } .c1 { background: #00f; } .c2 { background: #f00; } .c3 { background: #0f0; }
.c4 { background: #f0f; } .c5 { background: #ff0; } .c6 { background: #ff8080; } .c7 { background: #800000; }
.swatches { display: grid; grid-template-columns: repeat(8, 1fr); gap: 1px; height: 14px; margin-top: 3px; padding-left: 1px; }
.params { height: 206px; margin-top: 2px; padding: 3px 0 0 1px; border: 1px solid #ccc; }
.params > .check { padding-left: 2px; height: 10px; gap: 4px; }
.prow { display: grid; grid-template-columns: 1fr 40px; gap: 2px; height: 13px; margin-top: 2px; }
.prow label { border: 1px solid; border-color: #aaa #ddd #ddd #aaa; line-height: 12px; overflow: hidden; }
.prow input { width: 100%; }
.prow.spin { grid-template-columns: 1fr 29px 11px; column-gap: 0; }
.prow.spin label { margin-right: 2px; }
.prow.spin i { border: 1px solid; border-color: #ccc #888 #888 #ccc; background: linear-gradient(#f0f0f0 5px, #888 5px 6px, #f0f0f0 6px); }
.prow.later { margin-top: 17px; }
.advance { display: flex; justify-content: flex-end; gap: 3px; margin-top: 5px; }
.advance button { height: 15px; width: 22px; }
.advance button + button { width: 47px; }
.pname { display: flex; margin-top: 3px; }
.pname button { width: 42px; height: 13px; }
.pname input { flex: 1; }
.full { display: block; width: 106px; height: 16px; margin-top: 3px; }
.full.last { height: 15px; margin-top: 1px; border-color: transparent; box-shadow: none; }
.dock.right > .side { left: -7px; right: 0; top: 19px; width: auto; height: 379px; margin: 0; }
.brand { position: absolute; right: 16px; bottom: 7px; font: bold 58px/46px "Liberation Sans", sans-serif; color: #0434c8; -webkit-text-stroke: 2px #0434c8; }

/* status and task bars */
.status { display: flex; height: 13px; line-height: 12px; }
.msg { flex: 1; }
.cell { width: 38px; overflow: hidden; border: 1px solid; border-color: #bbb #eee #eee #bbb; margin-left: 1px; line-height: 11px; }
.coords { width: 71px; padding-left: 3px; }
.taskbar { display: grid; grid-template-columns: 30% 38% 3% 1fr; align-items: center; height: 27px; background: #1f1f1f; color: #eee; }
.launch { grid-column: 2; display: flex; align-items: center; gap: 9px; padding-left: 3px; padding-top: 4px; }
.launch button + button { margin-left: 4px; }
.search { display: flex; align-items: center; width: 147px; height: 22px; padding: 0 4px 0 7px; gap: 5px; border-radius: 11px; background: #3a3a3a; }
.search > svg { width: 12px; height: 12px; }
.search input { flex: 1; width: 40px; appearance: none; font: 10px/14px "Open Sans", sans-serif; }
.search input::placeholder { color: #ddd; opacity: 1; }
.search .scene { width: 36px; height: 19px; }
.running { width: 27px; height: 25px; display: grid; place-items: center; background: #333; border-bottom: 1px solid #4cc2ff; }
.tray { display: flex; align-items: center; gap: 7px; padding: 4px 11px 0 50px; }
.tray svg { width: 14px; height: 14px; }
.tray .bat { width: 16px; }
.tray .bell { margin-left: auto; }
.lang { margin: 0 4px; font: 8px/10px "Open Sans", sans-serif; }
```

FILE: script.js
```javascript
// Ruler scales: one millimetre is STEP pixels wide.
const NS = "http://www.w3.org/2000/svg";
const STEP = 3.17;

function add(parent, name, attrs, text) {
  const node = document.createElementNS(NS, name);
  for (const key in attrs) node.setAttribute(key, attrs[key]);
  if (text !== undefined) node.textContent = text;
  parent.appendChild(node);
}

const topRuler = document.getElementById("rulertop");
let d = "M0 12.500H740";
for (let mm = -116; mm <= 117; mm++) {
  const x = Math.round(369 + mm * STEP) + 0.5;
  const len = mm % 10 === 0 ? 6 : mm % 5 === 0 ? 5 : 4;
  d += `M${x} 12.500v-${len}`;
  if (mm % 10 === 0) add(topRuler, "text", { x, y: 6 }, mm);
}
add(topRuler, "path", { d, stroke: "#333", fill: "none" });

const leftRuler = document.getElementById("rulerleft");
d = "M14.500 0V389";
for (let mm = -61; mm <= 61; mm++) {
  const y = Math.round(194 - mm * STEP) + 0.5;
  const len = mm % 10 === 0 ? 7 : mm % 5 === 0 ? 5 : 4;
  d += `M14.500 ${y}h-${len}`;
  if (mm % 10 === 0) add(leftRuler, "text", { transform: `translate(6 ${y}) rotate(-90)` }, mm);
}
add(leftRuler, "path", { d, stroke: "#333", fill: "none" });
```
